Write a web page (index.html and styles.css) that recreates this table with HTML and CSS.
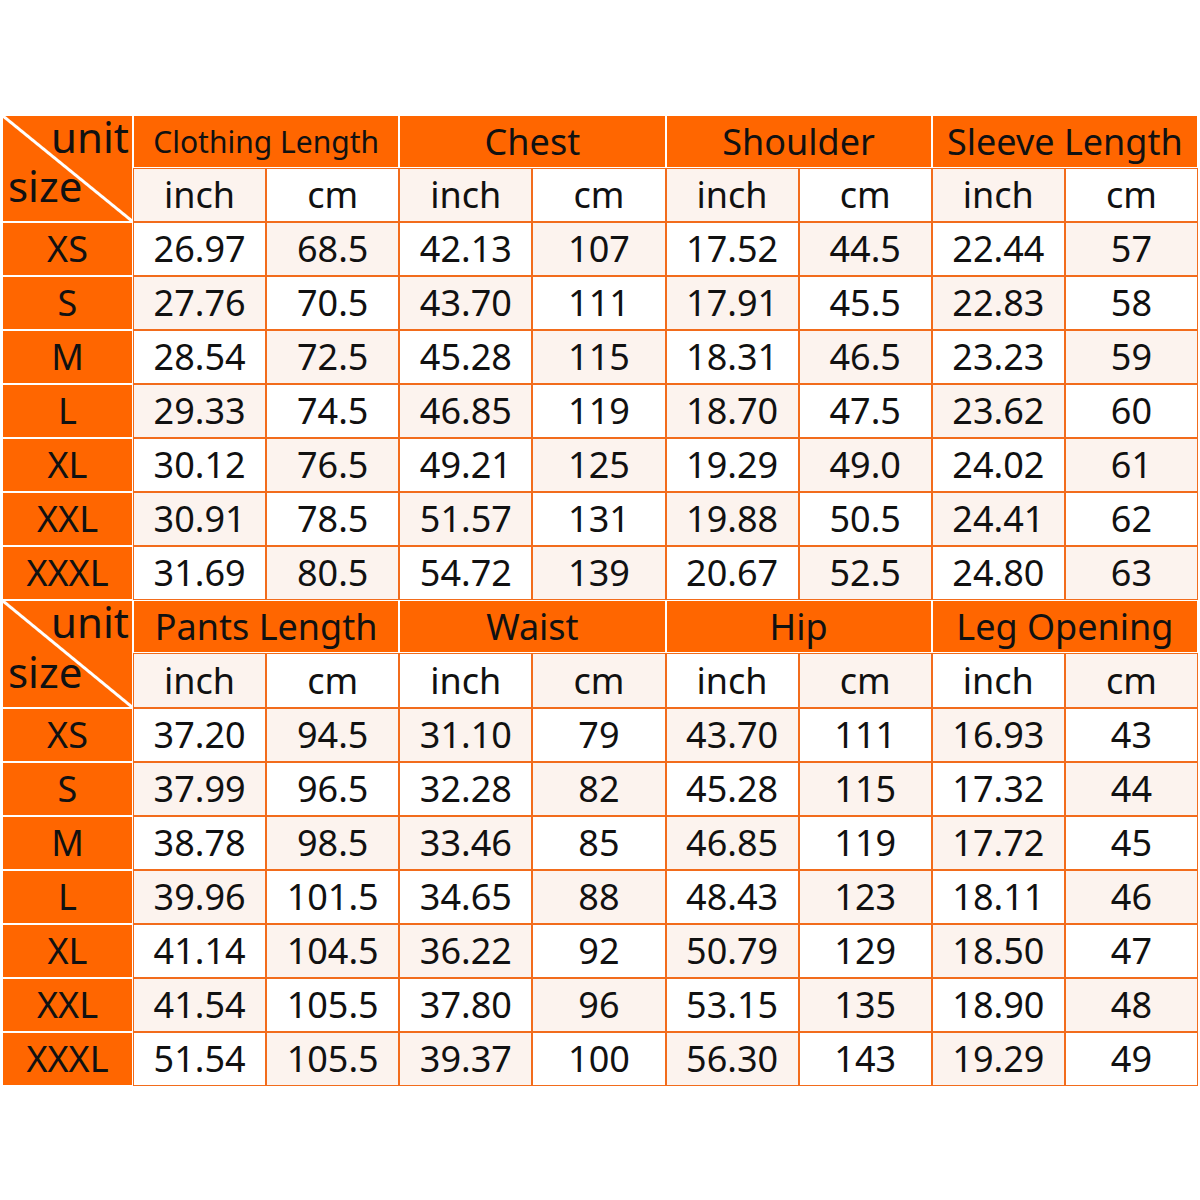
FILE: index.html
```html
<!DOCTYPE html>
<html lang="en">
<head>
<meta charset="utf-8">
<title>Size Chart</title>
<link rel="stylesheet" href="styles.css">
</head>
<body>
<div class="sheet">
  <div class="grid">
    <div class="corner"><span class="unit">unit</span><span class="size">size</span></div>
    <div class="hd hd-small">Clothing Length</div>
    <div class="hd">Chest</div>
    <div class="hd">Shoulder</div>
    <div class="hd">Sleeve Length</div>
    <div class="v sub p">inch</div><div class="v sub">cm</div><div class="v sub p">inch</div><div class="v sub">cm</div><div class="v sub p">inch</div><div class="v sub">cm</div><div class="v sub p">inch</div><div class="v sub">cm</div>

    <div class="sz">XS</div><div class="v">26.97</div><div class="v p">68.5</div><div class="v">42.13</div><div class="v p">107</div><div class="v">17.52</div><div class="v p">44.5</div><div class="v">22.44</div><div class="v p">57</div>
    <div class="sz">S</div><div class="v p">27.76</div><div class="v">70.5</div><div class="v p">43.70</div><div class="v">111</div><div class="v p">17.91</div><div class="v">45.5</div><div class="v p">22.83</div><div class="v">58</div>
    <div class="sz">M</div><div class="v">28.54</div><div class="v p">72.5</div><div class="v">45.28</div><div class="v p">115</div><div class="v">18.31</div><div class="v p">46.5</div><div class="v">23.23</div><div class="v p">59</div>
    <div class="sz">L</div><div class="v p">29.33</div><div class="v">74.5</div><div class="v p">46.85</div><div class="v">119</div><div class="v p">18.70</div><div class="v">47.5</div><div class="v p">23.62</div><div class="v">60</div>
    <div class="sz">XL</div><div class="v">30.12</div><div class="v p">76.5</div><div class="v">49.21</div><div class="v p">125</div><div class="v">19.29</div><div class="v p">49.0</div><div class="v">24.02</div><div class="v p">61</div>
    <div class="sz">XXL</div><div class="v p">30.91</div><div class="v">78.5</div><div class="v p">51.57</div><div class="v">131</div><div class="v p">19.88</div><div class="v">50.5</div><div class="v p">24.41</div><div class="v">62</div>
    <div class="sz">XXXL</div><div class="v">31.69</div><div class="v p">80.5</div><div class="v">54.72</div><div class="v p">139</div><div class="v">20.67</div><div class="v p">52.5</div><div class="v">24.80</div><div class="v p">63</div>
  </div>

  <div class="grid grid-b">
    <div class="corner"><span class="unit">unit</span><span class="size">size</span></div>
    <div class="hd">Pants Length</div>
    <div class="hd">Waist</div>
    <div class="hd">Hip</div>
    <div class="hd">Leg Opening</div>
    <div class="v sub p">inch</div><div class="v sub">cm</div><div class="v sub">inch</div><div class="v sub p">cm</div><div class="v sub">inch</div><div class="v sub p">cm</div><div class="v sub">inch</div><div class="v sub p">cm</div>

    <div class="sz">XS</div><div class="v">37.20</div><div class="v p">94.5</div><div class="v p">31.10</div><div class="v">79</div><div class="v p">43.70</div><div class="v">111</div><div class="v p">16.93</div><div class="v">43</div>
    <div class="sz">S</div><div class="v p">37.99</div><div class="v">96.5</div><div class="v">32.28</div><div class="v p">82</div><div class="v">45.28</div><div class="v p">115</div><div class="v">17.32</div><div class="v p">44</div>
    <div class="sz">M</div><div class="v">38.78</div><div class="v p">98.5</div><div class="v p">33.46</div><div class="v">85</div><div class="v p">46.85</div><div class="v">119</div><div class="v p">17.72</div><div class="v">45</div>
    <div class="sz">L</div><div class="v p">39.96</div><div class="v">101.5</div><div class="v">34.65</div><div class="v p">88</div><div class="v">48.43</div><div class="v p">123</div><div class="v">18.11</div><div class="v p">46</div>
    <div class="sz">XL</div><div class="v">41.14</div><div class="v p">104.5</div><div class="v p">36.22</div><div class="v">92</div><div class="v p">50.79</div><div class="v">129</div><div class="v p">18.50</div><div class="v">47</div>
    <div class="sz">XXL</div><div class="v p">41.54</div><div class="v">105.5</div><div class="v">37.80</div><div class="v p">96</div><div class="v">53.15</div><div class="v p">135</div><div class="v">18.90</div><div class="v p">48</div>
    <div class="sz">XXXL</div><div class="v">51.54</div><div class="v p">105.5</div><div class="v p">39.37</div><div class="v">100</div><div class="v p">56.30</div><div class="v">143</div><div class="v p">19.29</div><div class="v">49</div>
  </div>
</div>
</body>
</html>
```
FILE: styles.css
```css
html, body {
  margin: 0;
  padding: 0;
  background: #ffffff;
}

.sheet {
  padding: 115px 0 0 2px;
  font-family: "Noto Sans", "Open Sans", sans-serif;
  color: #111111;
}

.grid {
  display: grid;
  width: 1196px;
  grid-template-columns: 131px repeat(8, 1fr);
  grid-template-rows: 53px 54px repeat(7, 54px);
}

.grid-b {
  grid-template-rows: 53px 55px repeat(7, 54px);
}

.grid > div {
  box-sizing: border-box;
  display: flex;
  align-items: center;
  justify-content: center;
  line-height: 1;
  white-space: nowrap;
}

.corner {
  grid-row: span 2;
  flex-direction: column;
  justify-content: space-between !important;
  align-items: stretch !important;
  border: 1px solid #ffffff;
  background: linear-gradient(to top right,
      #ff6600 calc(50% - 2px),
      #ffffff calc(50% - 1px),
      #ffffff calc(50% + 1px),
      #ff6600 calc(50% + 2px));
  font-size: 42px;
}

.unit {
  align-self: flex-end;
  margin-right: 3px;
}

.size {
  align-self: flex-start;
  margin-left: 5px;
  margin-bottom: 14px;
}

.hd {
  grid-column: span 2;
  background: #ff6600;
  border: 1px solid #ffffff;
  font-size: 36px;
}

.hd-small {
  font-size: 30px;
}

.sz {
  background: #ff6600;
  border: 1px solid #ffffff;
  font-size: 36px;
}

.v {
  background: #ffffff;
  border: 1px solid #f26c1c;
  font-size: 36px;
}

.v.p {
  background: #fcf3ee;
}
```
